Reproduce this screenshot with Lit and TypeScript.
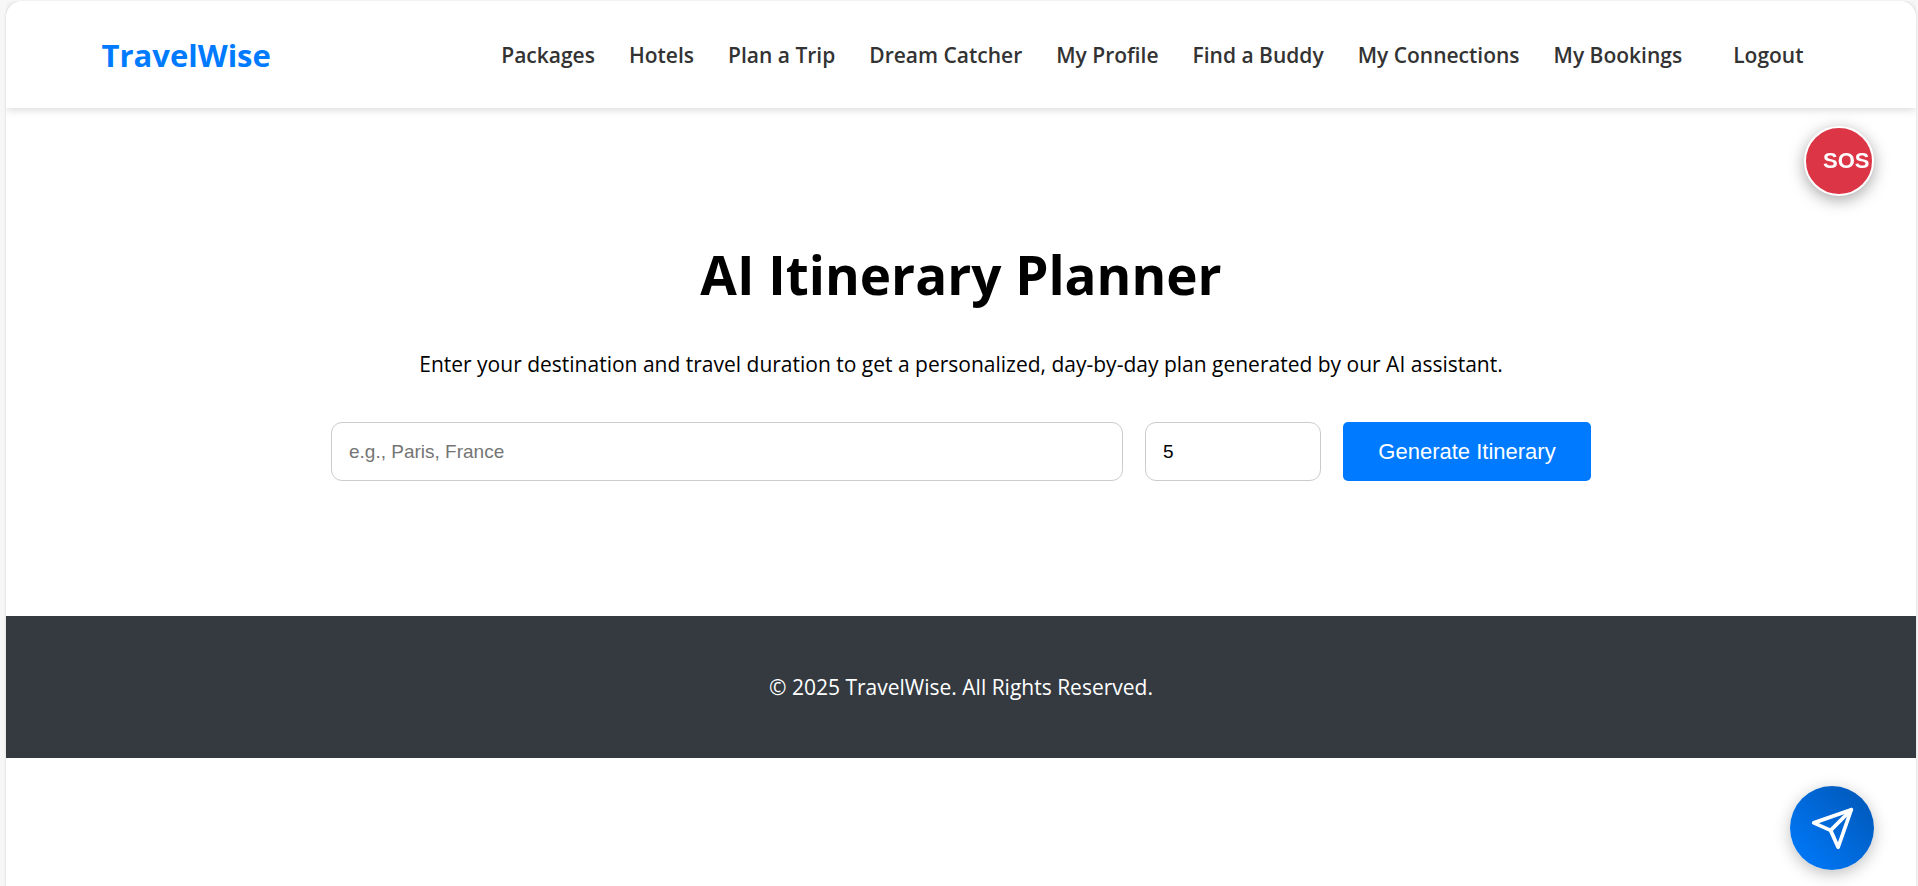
import { LitElement, html, css, svg } from "lit";
import { customElement, state } from "lit/decorators.js";

const NAV_LINKS = [
  "Packages",
  "Hotels",
  "Plan a Trip",
  "Dream Catcher",
  "My Profile",
  "Find a Buddy",
  "My Connections",
  "My Bookings",
];

@customElement("site-header")
class SiteHeader extends LitElement {
  static styles = css`
    :host {
      display: block;
      background: #fff;
      box-shadow: 0 2px 8px rgba(0, 0, 0, 0.15);
      border-radius: 16px 16px 0 0;
      clip-path: inset(0 0 -16px 0);
    }
    .bar {
      display: flex;
      align-items: center;
      justify-content: space-between;
      gap: 24px;
      min-height: 107px;
      padding: 0 5%;
      box-sizing: border-box;
    }
    .brand {
      color: #007bff;
      font-size: 31px;
      font-weight: 700;
      text-decoration: none;
    }
    .links {
      display: flex;
      flex-wrap: wrap;
      align-items: center;
      gap: 34px;
    }
    .link,
    .logout {
      color: #333;
      font: inherit;
      font-size: 21px;
      font-weight: 600;
      white-space: nowrap;
      text-decoration: none;
    }
    .logout {
      padding: 8px 17px;
      border: 0;
      background: none;
      cursor: pointer;
    }
  `;

  render() {
    return html`
      <header class="bar">
        <a class="brand" href="#">TravelWise</a>
        <nav class="links">
          ${NAV_LINKS.map((l) => html`<a class="link" href="#">${l}</a>`)}
          <button class="logout" type="button">Logout</button>
        </nav>
      </header>
    `;
  }
}

@customElement("itinerary-planner")
class ItineraryPlanner extends LitElement {
  static styles = css`
    :host {
      display: block;
      padding: 128px 5% 135px;
      text-align: center;
      color: #000;
    }
    .title {
      margin: 0;
      font-size: 53px;
      line-height: 78px;
      font-weight: 700;
    }
    .lead {
      margin: 34px 0 42px;
      font-size: 21px;
      line-height: 32px;
    }
    .form {
      display: flex;
      gap: 22px;
      max-width: 1260px;
      margin: 0 auto;
    }
    .field {
      box-sizing: border-box;
      min-width: 0;
      height: 59px;
      padding: 0 17px;
      border: 1px solid #ccc;
      border-radius: 11px;
      background: #fff;
      color: #000;
      font: 19px "Liberation Sans", Arial, sans-serif;
    }
    .field::placeholder {
      color: #757575;
    }
    .destination {
      flex: 1;
    }
    .days {
      width: 176px;
    }
    .submit {
      min-width: 248px;
      padding: 0 34px;
      border: 0;
      border-radius: 5px;
      background: #007bff;
      color: #fff;
      font: 22px "Liberation Sans", Arial, sans-serif;
      cursor: pointer;
    }
  `;

  @state() private days = 5;

  render() {
    return html`
      <h1 class="title">AI Itinerary Planner</h1>
      <p class="lead">
        Enter your destination and travel duration to get a personalized, day-by-day plan generated by our AI assistant.
      </p>
      <form class="form" @submit=${(e: Event) => e.preventDefault()}>
        <input class="field destination" type="text" aria-label="Destination" placeholder="e.g., Paris, France" />
        <input
          class="field days"
          type="number"
          min="1"
          aria-label="Duration in days"
          .value=${String(this.days)}
          @input=${(e: Event) => (this.days = Number((e.target as HTMLInputElement).value))}
        />
        <button class="submit" type="submit">Generate Itinerary</button>
      </form>
    `;
  }
}

const sendIcon = svg`
  <path d="M22 2 11 13" />
  <path d="M22 2 15 22 11 13 2 9Z" />
`;

@customElement("app-root")
class AppRoot extends LitElement {
  static styles = css`
    :host {
      display: block;
      box-sizing: border-box;
      min-height: 100vh;
      padding: 1px 2px 0 6px;
      background: #f7f7f7;
      font-family: "Segoe UI", "Open Sans", sans-serif;
    }
    .page {
      min-height: calc(100vh - 1px);
      border-radius: 16px 16px 0 0;
      background: #fff;
      box-shadow: 0 1px 3px rgba(0, 0, 0, 0.15);
    }
    .footer {
      padding: 55px 5%;
      background: #343a40;
      color: #fff;
      font-size: 21px;
      line-height: 32px;
      text-align: center;
    }
    .sos,
    .chat {
      position: fixed;
      right: 44px;
      box-sizing: border-box;
      border-radius: 50%;
      color: #fff;
      cursor: pointer;
    }
    .sos {
      top: 126px;
      width: 70px;
      height: 70px;
      padding: 0 0 0 17px;
      border: 2px solid #fff;
      background: #dc3545;
      box-shadow: 0 4px 16px rgba(0, 0, 0, 0.35);
      font: bold 22px "Liberation Sans", Arial, sans-serif;
      text-align: left;
    }
    .chat {
      bottom: 16px;
      display: grid;
      place-items: center;
      width: 84px;
      height: 84px;
      padding: 0;
      border: 0;
      background: linear-gradient(45deg, #007bff, #0056b3);
      box-shadow: 0 4px 16px rgba(0, 0, 0, 0.25);
    }
    .send {
      width: 45px;
      height: 45px;
      fill: none;
      stroke: currentColor;
      stroke-width: 2;
      stroke-linecap: round;
      stroke-linejoin: round;
    }
  `;

  render() {
    return html`
      <div class="page">
        <site-header></site-header>
        <main><itinerary-planner></itinerary-planner></main>
        <footer class="footer">© 2025 TravelWise. All Rights Reserved.</footer>
      </div>
      <button class="sos" type="button">SOS</button>
      <button class="chat" type="button" aria-label="Open chat">
        <svg class="send" viewBox="0 0 24 24" aria-hidden="true">${sendIcon}</svg>
      </button>
    `;
  }
}
